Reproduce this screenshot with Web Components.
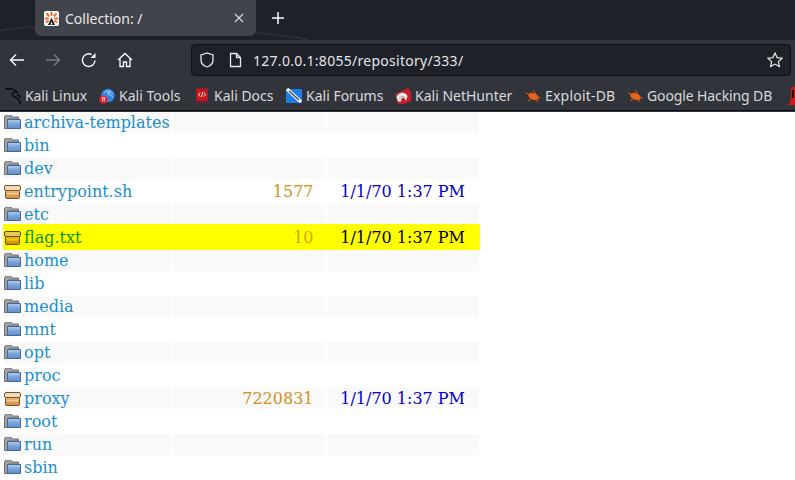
<!DOCTYPE html>
<html><head><meta charset="utf-8"><style>
html,body{margin:0;padding:0;height:480px;overflow:hidden;background:#fff}
</style></head><body>
<browser-chrome></browser-chrome>
<listing-table>
<listing-row kind="dir" name="archiva-templates" shade></listing-row>
<listing-row kind="dir" name="bin"></listing-row>
<listing-row kind="dir" name="dev" shade></listing-row>
<listing-row kind="file" name="entrypoint.sh" size="1577" date="1/1/70 1:37 PM"></listing-row>
<listing-row kind="dir" name="etc" shade></listing-row>
<listing-row kind="file" name="flag.txt" size="10" date="1/1/70 1:37 PM" hit></listing-row>
<listing-row kind="dir" name="home" shade></listing-row>
<listing-row kind="dir" name="lib"></listing-row>
<listing-row kind="dir" name="media" shade></listing-row>
<listing-row kind="dir" name="mnt"></listing-row>
<listing-row kind="dir" name="opt" shade></listing-row>
<listing-row kind="dir" name="proc"></listing-row>
<listing-row kind="file" name="proxy" size="7220831" date="1/1/70 1:37 PM" shade></listing-row>
<listing-row kind="dir" name="root"></listing-row>
<listing-row kind="dir" name="run" shade></listing-row>
<listing-row kind="dir" name="sbin"></listing-row>
</listing-table>
<script>
let uid=0;
const folder=()=>{const i='f'+(uid++);return `<svg width="17" height="16" viewBox="0 1 17 16"><defs><linearGradient id="${i}" x1="0" y1="0" x2="0" y2="1"><stop offset="0" stop-color="#b4cdec"/><stop offset=".45" stop-color="#7fa6d8"/><stop offset="1" stop-color="#5f8cc6"/></linearGradient></defs><path d="M.5 14.500V2.500L2 1h5l1.500 2h6v2H4v9.500z" fill="#a2a2a2" stroke="#707070"/><path d="M3.500 5.500h13v9h-13z" fill="url(#${i})" stroke="#44689c"/></svg>`};
const box=(a,b,c,d,e)=>{const i='b'+(uid++);return `<svg width="17" height="16" viewBox="0 0 17 16"><defs><linearGradient id="${i}" x1="0" y1="0" x2="0" y2="1"><stop offset="0" stop-color="${a}"/><stop offset="1" stop-color="${b}"/></linearGradient></defs><rect x="1.500" y="6.500" width="14" height="8" rx="1" fill="url(#${i})" stroke="${c}"/><rect x="3" y="9" width="11" height="1.500" fill="${e}" opacity=".7"/><rect x=".500" y="1.500" width="16" height="5" rx="1.500" fill="${d}" stroke="${c}"/></svg>`};
const ICON={
kali:`<svg width="16" height="16" viewBox="0 0 16 16" fill="none" stroke="#08080a" stroke-width="1.300"><path d="M0 1C4 0 9 1 12 4C9 3.500 6 5 8 8C10 10 12 9 13 11C14 13 15 14 15.500 16"/><path d="M12 6.500c2 .5 3 2 3.500 3.500"/></svg>`,
tools:`<svg width="16" height="16" viewBox="0 0 16 16"><circle cx="9" cy="7.500" r="6.800" fill="#2f86e6"/><path d="M5 5c3-3 6-2.500 9 1.500M8 4l6 5M11 2.500l-2 5" stroke="#cfe4fb" stroke-width=".8" fill="none"/><circle cx="4.500" cy="11.500" r="4" fill="#ea2228"/><path d="M2.800 9.800h3.400M3.700 9.800v3.500M5.300 9.800v3.500" stroke="#fff" stroke-width=".8"/></svg>`,
docs:`<svg width="14" height="16" viewBox="0 0 14 16"><path d="M1 .5h12v12.500H1z" fill="#c4161c"/><path d="M1 13h12v2H2z" fill="#5b2a30"/><path d="M5 4.500L3.500 6.500 5 8.500M9 4.500l1.500 2L9 8.500M7.800 4L6.300 9" stroke="#fff" fill="none"/></svg>`,
forums:`<svg width="16" height="16" viewBox="0 0 16 16"><rect x="0" y="1" width="16" height="14" rx="1" fill="#1e7ee8"/><path d="M1 1l14 13" stroke="#f2f2f2" stroke-width="3.500"/><path d="M3 3l10 9" stroke="#444" stroke-width="1.200"/></svg>`,
hunter:`<svg width="16" height="16" viewBox="0 0 16 16"><path d="M0 6L13 0l3 4v9L9 16H3z" fill="#c81f2c"/><path d="M1.500 9c2-5 8-6 11-1l-1.500 5C9 8.500 6 9 6 13.500H3z" fill="#eee"/><path d="M4.500 11c1-3 4-3.500 6-1" stroke="#999" fill="none"/></svg>`,
bug:`<svg width="16" height="14" viewBox="0 0 16 14"><ellipse cx="8.500" cy="7.500" rx="5.500" ry="3.300" fill="#e8651a" transform="rotate(22 8.500 7.500)"/><path d="M1 4l6 2M3 12l4-3M8 1l3 4M15.500 9L11 8M13 13l-3-4" stroke="#d95a14"/></svg>`,
red:`<svg width="10" height="18" viewBox="0 0 10 18"><path d="M3 0h7v18H0l3-5z" fill="#d01818"/><path d="M4 3h2v8H4z" fill="#300"/></svg>`
};
class BrowserChrome extends HTMLElement{constructor(){super();this.attachShadow({mode:'open'}).innerHTML=`<style>
:host{display:block;font-family:"Noto Sans","Open Sans",sans-serif;color:#fbfbfe;height:112px;background:#32343c}
.tabs{height:40px;background:#1f2128;display:flex;padding-left:35px;box-sizing:border-box;align-items:flex-start;position:relative;overflow:hidden}
.arc{position:absolute;left:0;top:0}
.tab,.new{position:relative}
.tab{width:221px;height:36px;background:#42444c;border-radius:0 0 6px 6px;display:flex;align-items:center;box-sizing:border-box;padding:0 12px 0 9px;font-size:14px;gap:6px;color:#e8e8ea}
.fav{width:15px;height:15px;flex:none;display:block;border-radius:2px}
.title{flex:1}
.new{margin:10px 0 0 14px;width:16px;height:16px}
.bar{height:38px;display:flex;align-items:center;padding-left:9px;box-sizing:border-box;padding-top:2px}
.btn{width:16px;height:16px;flex:none}
.url{margin-left:58px;width:600px;height:32px;flex:none;background:#1f2128;border:1px solid #101014;border-radius:4px;box-sizing:border-box;display:flex;align-items:center;padding:0 7px;font-size:14px;color:#e4e4e8}
.url svg{flex:none}
.u{flex:1;margin-left:11px;letter-spacing:.02em}
.marks{height:33px;display:flex;align-items:center;padding-left:5px;font-size:14px;color:#d8d8dc;white-space:nowrap;overflow:hidden;box-sizing:border-box;padding-top:3px;border-bottom:1px solid #0c0c0d}
.m{display:flex;align-items:center;gap:4px;flex:none}
.m svg{flex:none}
.i{width:16px;display:flex;justify-content:center;flex:none}
</style>
<div class="tabs">
<svg class="arc" width="795" height="40" fill="none" stroke="#2c2e36" stroke-width="2"><path d="M0 31C12 28 24 27 35 27M256 33C272 34 292 36 308 40"/></svg>
<div class="tab">
<svg class="fav" viewBox="0 0 15 15"><rect width="15" height="15" fill="#fff"/><g stroke="#f0641e" stroke-width="2" stroke-linecap="round"><path d="M7.500 1.500v2.500M3 2.800l1.800 2M12 2.800l-1.800 2M1.500 7.500h2.500M13.500 7.500h-2.500M2.500 11l1.500-1M12.500 11l-1.500-1"/></g><path d="M7.500 6.500L11 14H4z" fill="#1c1c1c"/><path d="M7.500 10.500l1 3h-2z" fill="#fff"/></svg>
<span class="title">Collection: /</span>
<svg width="10" height="10" viewBox="0 0 10 10" stroke="#d8d8dc" stroke-width="1.200"><path d="M1 1l8 8M9 1l-8 8"/></svg>
</div><svg class="new" viewBox="0 0 16 16" stroke="#fbfbfe" stroke-width="1.500"><path d="M8 2v12M2 8h12"/></svg></div>
<div class="bar">
<svg class="btn" viewBox="0 0 16 16" fill="none" stroke="#fbfbfe" stroke-width="1.400"><path d="M15 8H1.500M7 2.500L1.500 8 7 13.500"/></svg>
<svg class="btn" style="margin-left:20px" viewBox="0 0 16 16" fill="none" stroke="#7a7b80" stroke-width="1.400"><path d="M1 8h13.500M9 2.500L14.500 8 9 13.500"/></svg>
<svg class="btn" style="margin-left:20px" viewBox="0 0 16 16" fill="none" stroke="#fbfbfe" stroke-width="1.400"><path d="M14 8.500A6.300 6.300 0 1 1 10.500 2.500"/><path d="M14.500 1v5h-5" fill="#fbfbfe" stroke="none"/></svg>
<svg class="btn" style="margin-left:20px" viewBox="0 0 16 16" fill="none" stroke="#fbfbfe" stroke-width="1.300"><path d="M1 8L8 1.500 15 8M3 6.500V14.500H6.500V10h3v4.500H13V6.500"/></svg>
<div class="url">
<svg width="16" height="16" viewBox="0 0 16 16" fill="none" stroke="#e8e8ea" stroke-width="1.300"><path d="M8 1L2 3v5c0 3.500 3 6 6 7 3-1 6-3.500 6-7V3z"/></svg>
<svg style="margin-left:14px" width="13" height="16" viewBox="0 0 13 16" fill="none" stroke="#e8e8ea" stroke-width="1.300"><path d="M1.500 1.500h6l4 4v9h-10zM7.500 1.500v4h4"/></svg>
<span class="u">127.0.0.1:8055/repository/333/</span>
<svg width="16" height="16" viewBox="0 0 16 16" fill="none" stroke="#e8e8ea" stroke-width="1.200"><path d="M8 1l2.100 4.600 5 .6-3.700 3.400 1 5L8 12.100 3.600 14.600l1-5L.9 6.200l5-.6z"/></svg>
</div></div>
<div class="marks">
<span class="m" style="width:94px"><span class="i">${ICON.kali}</span><span style="letter-spacing:-.1px">Kali Linux</span></span>
<span class="m" style="width:95px"><span class="i">${ICON.tools}</span>Kali Tools</span>
<span class="m" style="width:92px"><span class="i">${ICON.docs}</span>Kali Docs</span>
<span class="m" style="width:109px"><span class="i">${ICON.forums}</span>Kali Forums</span>
<span class="m" style="width:130px"><span class="i">${ICON.hunter}</span>Kali NetHunter</span>
<span class="m" style="width:102px"><span class="i">${ICON.bug}</span><span style="letter-spacing:.2px">Exploit-DB</span></span>
<span class="m" style="width:158px"><span class="i">${ICON.bug}</span><span style="letter-spacing:-.12px">Google Hacking DB</span></span>
<span class="m"><span class="i">${ICON.red}</span></span>
</div>`}}
class ListingTable extends HTMLElement{constructor(){super();this.attachShadow({mode:'open'}).innerHTML=`<style>
:host{display:grid;grid-template-columns:167px 152px 152px;column-gap:2px;row-gap:2px;margin-left:4px;width:475px;font:16px "DejaVu Serif",serif}
::slotted(*){grid-column:1/-1}
</style><slot></slot>`}}
class ListingRow extends HTMLElement{connectedCallback(){
const a=k=>this.getAttribute(k)||'';const hit=this.hasAttribute('hit');const file=a('kind')=='file';
const shade=this.hasAttribute('shade');
const ic=hit?box('#efc000','#c98a00','#6b4a00','#e6cc58','#f7dc40'):file?box('#eeb878','#cf8a44','#7a5424','#f0dcb8','#f8d8b0'):folder();
this.attachShadow({mode:'open'}).innerHTML=`<style>
:host{display:grid;grid-template-columns:subgrid;height:21px;line-height:21px;position:relative;white-space:nowrap}
:host([hit]){height:26px;margin:-3px -1px -2px -1px;padding-left:1px;padding-right:1px;background:#ff0;line-height:27px;z-index:1}
.c{${shade?'background:#f9f9f9;':''}height:100%}
.n{display:flex;align-items:center;color:#1a8fd0;gap:3px}
.s{text-align:right;padding-right:11.5px;color:#d1911c}
.d{text-align:right;padding-right:14px;color:#0000cd}
:host([hit]) .c{background:none}
:host([hit]) .n{color:#0a9400}
:host([hit]) .s{color:#d6a400}
:host([hit]) .d{color:#000}
svg{flex:none}
</style><div class="c n">${ic}<span>${a('name')}</span></div><div class="c s">${a('size')}</div><div class="c d">${a('date')}</div>`}}
customElements.define('browser-chrome',BrowserChrome);
customElements.define('listing-table',ListingTable);
customElements.define('listing-row',ListingRow);
</script>
</body></html>
